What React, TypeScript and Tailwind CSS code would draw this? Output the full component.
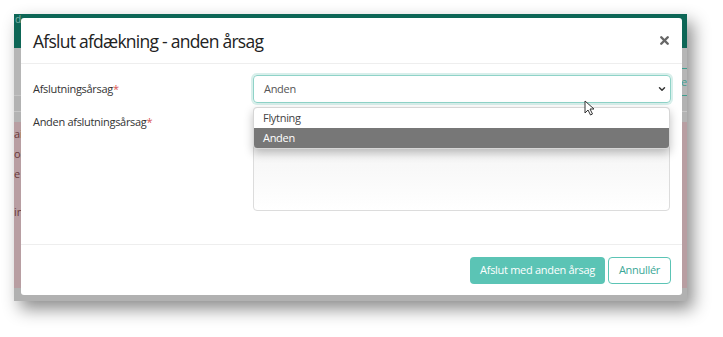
import { ChevronDown, X } from 'lucide-react';

export default function App() {
  return (
    <div className="w-[723px] h-[337px] bg-white p-[14px] font-['Open_Sans',sans-serif]">
      {/* Screenshot frame with drop shadow */}
      <div className="relative w-[673px] h-[287px] overflow-hidden shadow-[6px_8px_16px_rgba(0,0,0,0.45)]">
        {/* Dimmed page behind the modal */}
        <div className="flex flex-col h-full bg-[#b4b4b4]">
          <div className="h-[34px] bg-[#0d6656] text-[10px] text-[#7fb0a6] pl-[1px] leading-[10px]">d</div>
          <div className="h-[48px] bg-[#b6b6b6] border-b border-[#c4c4c4]"></div>
          <div className="h-[16px] bg-[#b2b2b2] border-b border-[#c6c6c6] flex justify-end">
            <div className="w-[8px] h-[28px] -mt-[28px] border-y border-l border-[#3f9e8f] text-[#3f9e8f] text-[11px] leading-[26px] pl-[1px]">e</div>
          </div>
          <div className="h-[10px] bg-[#b3b3b3]"></div>
          <div className="flex-1 bg-[#b89ea2] text-[11px] text-[#6b3a3a] leading-[20px] pt-[2px]">
            <div>ai</div>
            <div>ol</div>
            <div>e</div>
            <div className="mt-[18px]">in</div>
          </div>
          <div className="h-[13px] bg-[#b1b1b1]"></div>
        </div>

        {/* Modal */}
        <div className="absolute left-[7px] top-[4px] w-[661px] h-[277px] bg-white rounded-[3px] flex flex-col">
          <div className="h-[46px] border-b border-[#eeeeee] flex items-center justify-between pl-[12px] pr-[11px]">
            <h4 className="text-[17.5px] text-[#222] tracking-[-0.75px] pt-[2px]">Afslut afdækning - anden årsag</h4>
            <X className="w-[13px] h-[13px] text-[#666]" strokeWidth={4.5} />
          </div>

          <div className="relative flex-1 border-b border-[#eeeeee] pl-[12px] pr-[11px] pt-[11px]">
            <div className="flex items-center">
              <label className="w-[220px] text-[11px] tracking-[-0.3px] text-[#333]">
                Afslutningsårsag<span className="text-[#d9534f]">*</span>
              </label>
              <div className="flex-1 h-[28px] rounded-[4px] border border-[#8fd3c8] shadow-[0_0_0_2px_#d8efeb] flex items-center justify-between pl-[10px] pr-[3px] text-[11px] tracking-[-0.3px] text-[#555]">
                <span>Anden</span>
                <ChevronDown className="w-[10px] h-[10px] text-[#333]" strokeWidth={3.5} />
              </div>
            </div>

            <div className="flex mt-[4px]">
              <label className="w-[220px] text-[11px] tracking-[-0.3px] text-[#333] pt-[7px]">
                Anden afslutningsårsag<span className="text-[#d9534f]">*</span>
              </label>
              <div className="flex-1 h-[104px] mr-[1px] rounded-[4px] border border-[#dcdcdc] bg-gradient-to-b from-[#e9e9e9] via-[#f7f7f7] to-white"></div>
            </div>

            {/* Open select list */}
            <div className="absolute left-[232px] top-[43px] w-[417px] rounded-[4px] bg-white border border-[#d6d6d6] overflow-hidden shadow-[0_4px_10px_rgba(0,0,0,0.25)] text-[11px] tracking-[-0.3px]">
              <div className="h-[20px] pl-[9px] flex items-center text-[#444]">Flytning</div>
              <div className="h-[20px] pl-[9px] flex items-center bg-[#777777] text-white">Anden</div>
            </div>

            {/* Mouse pointer */}
            <svg className="absolute left-[563px] top-[36px]" width="11" height="16" viewBox="0 0 11 16">
              <path d="M1 1 L1 13 L4 10 L6.5 15 L8.5 14 L6 9 L10 9 Z" fill="white" stroke="#333" strokeWidth="1" strokeLinejoin="round" />
            </svg>
          </div>

          <div className="h-[50px] flex items-center justify-end gap-[3px] pr-[11px]">
            <button className="h-[27px] px-[10px] rounded-[4px] bg-[#5bc4b5] text-white text-[11px] tracking-[-0.3px]">Afslut med anden årsag</button>
            <button className="h-[27px] px-[10px] rounded-[4px] bg-white border border-[#5bc4b5] text-[#3aa797] text-[11px] tracking-[-0.3px]">Annullér</button>
          </div>
        </div>
      </div>
    </div>
  );
}
